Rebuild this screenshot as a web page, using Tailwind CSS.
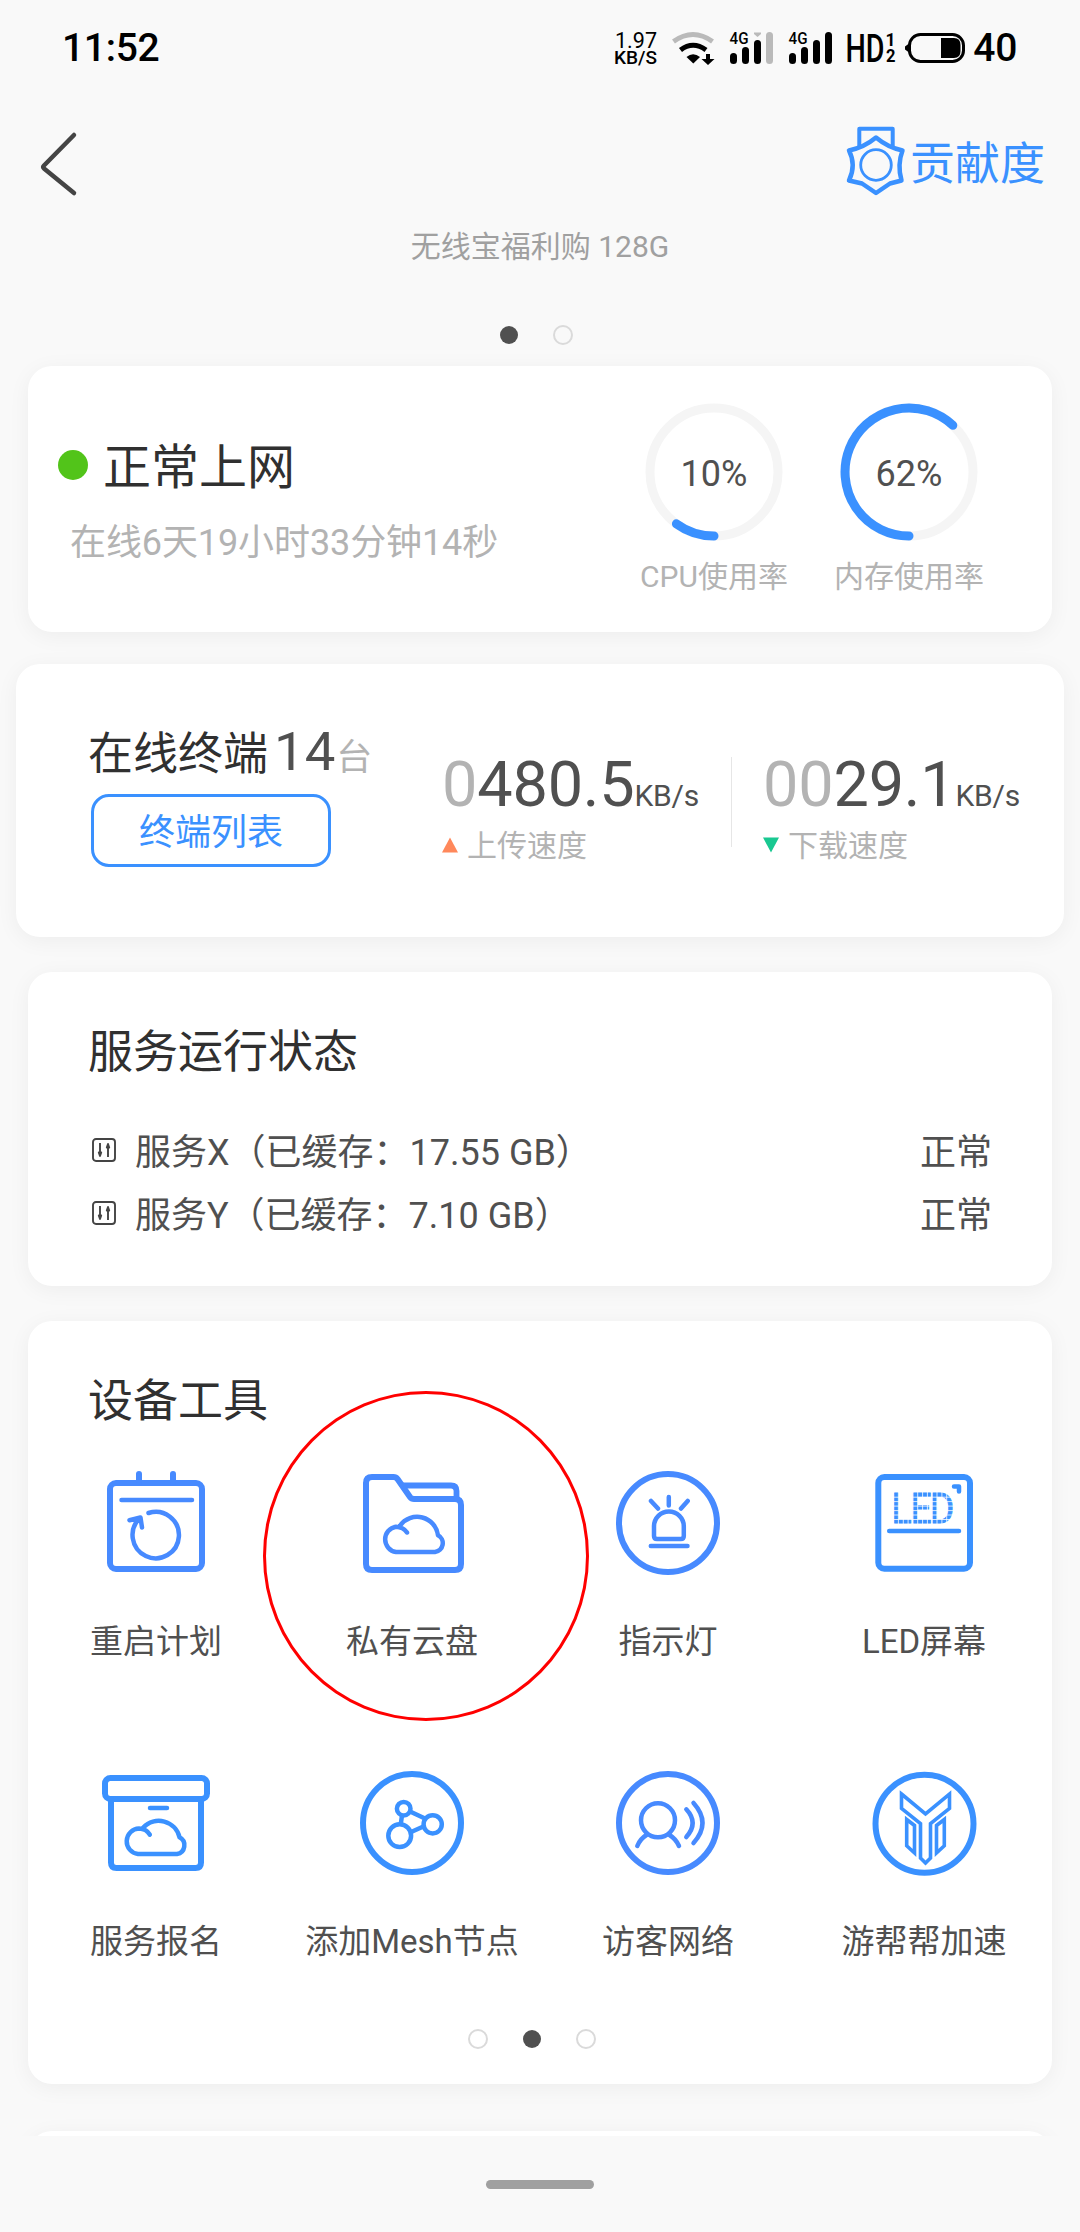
<!DOCTYPE html>
<html lang="zh-CN">
<head>
<meta charset="utf-8">
<title>无线宝</title>
<script src="https://cdn.jsdelivr.net/npm/@tailwindcss/browser@4"></script>
</head>
<body class="w-[1080px] h-[2232px] overflow-hidden bg-[#f9f9f9] font-[Roboto,'Noto_Sans_CJK_SC',sans-serif] text-[#505050]">
<div class="relative flex flex-col w-[1080px] h-[2232px]">

  <!-- status bar -->
  <header class="flex h-24 justify-between pl-[62px] pr-[63px] text-black">
    <div class="text-[39px] leading-[96px] font-medium tracking-[-0.3px]">11:52</div>
    <div class="flex">
      <svg class="w-[360px] h-24" viewBox="610 0 360 96" fill="none">
        <text x="615" y="47.500" font-size="21.500" fill="#000" textLength="42" lengthAdjust="spacingAndGlyphs">1.97</text>
        <text x="614" y="64" font-size="18.500" font-weight="500" fill="#000" textLength="43" lengthAdjust="spacingAndGlyphs">KB/S</text>
        <!-- wifi -->
        <path d="M673.500 41.500Q693 27.500 712.500 41.500" stroke="#bababa" stroke-width="5"/>
        <path d="M680.500 50Q693 40.500 706 50" stroke="#000" stroke-width="5"/>
        <path d="M686.500 57Q693 51.500 700 57L693.300 63.500Z" fill="#000"/>
        <path d="M706 54h4v5h4.500L708 65l-6.500-6H706z" fill="#000"/>
        <!-- sim 1 -->
        <text x="729.500" y="44" font-size="16" font-weight="500" fill="#000" textLength="19" lengthAdjust="spacingAndGlyphs">4G</text>
        <path d="M754 32.500h7v1.500l-3.500 3-3.500-3z" fill="#bababa"/>
        <g fill="#000"><rect x="730" y="53" width="7" height="11" rx="3.500"/><rect x="742" y="47" width="7" height="17" rx="3.500"/><rect x="754" y="40" width="7" height="24" rx="3.500"/></g>
        <rect x="766" y="32" width="7" height="32" rx="3.500" fill="#bababa"/>
        <!-- sim 2 -->
        <text x="788.500" y="44" font-size="16" font-weight="500" fill="#000" textLength="19" lengthAdjust="spacingAndGlyphs">4G</text>
        <g fill="#000"><rect x="789" y="53" width="7" height="11" rx="3.500"/><rect x="801" y="47" width="7" height="17" rx="3.500"/><rect x="813" y="40" width="7" height="24" rx="3.500"/><rect x="825" y="32" width="7" height="32" rx="3.500"/></g>
        <text x="845.500" y="62" font-size="39" font-weight="500" fill="#000" textLength="39" lengthAdjust="spacingAndGlyphs">HD</text>
        <text x="885.500" y="46" font-size="17.500" font-weight="700" fill="#000">1</text>
        <text x="886" y="62" font-size="17.500" font-weight="700" fill="#000" textLength="9.500" lengthAdjust="spacingAndGlyphs">2</text>
        <!-- battery -->
        <rect x="909.500" y="34.500" width="54" height="27" rx="11" stroke="#000" stroke-width="3"/>
        <path d="M909 43.500v9l-4-3v-3z" fill="#000"/>
        <path d="M941 38h13q6.500 0 6.500 7v6q0 7-6.500 7h-13z" fill="#000"/>
      </svg>
      <div class="ml-[3px] text-[39px] leading-[96px] font-medium tracking-[-0.3px]">40</div>
    </div>
  </header>

  <!-- title bar -->
  <div class="flex h-[124px] justify-between pl-[36px] pr-[35px]">
    <svg class="mt-[32px] w-12 h-[76px]" viewBox="36 128 48 76" fill="none" stroke="#444" stroke-width="4.500" stroke-linecap="round" stroke-linejoin="round"><path d="M74 135L44 165.500Q42.500 167 44 168.500L74 193"/></svg>
    <div class="flex text-[#3a91ff]">
      <svg class="mt-[26px] w-[66px] h-[80px]" viewBox="844 122 66 80" fill="none" stroke="currentColor" stroke-width="4">
        <path d="M859.300 148V128.800H892.700V148" stroke-linejoin="round"/>
        <path d="M876 137.500Q888 147.500 902.500 150.500Q897 165 901.500 180.500L890 183.500L876 193L862 183.500L849 180.500Q856.500 165 849 150.500Q864 147.500 876 137.500Z" stroke-width="4.500" stroke-linejoin="round"/>
        <circle cx="876" cy="165" r="15.300" stroke-width="2.800"/>
      </svg>
      <span class="text-[45px] leading-[138px]">贡献度</span>
    </div>
  </div>

  <div class="h-[54px] text-center text-[30px] leading-[54px] text-[#a0a0a0]">无线宝福利购 128G</div>
  <div class="flex h-[92px] items-center justify-center gap-[35px] pt-[30px] pr-[7px]">
    <span class="size-[18px] rounded-full bg-[#505050]"></span>
    <span class="size-5 rounded-full border-2 border-[#dadada]"></span>
  </div>

  <!-- connection -->
  <section class="mx-7 flex h-[266px] justify-between rounded-3xl bg-white pl-[30px] pr-[67px] shadow-[0_4px_22px_rgba(0,0,0,0.05)]">
    <div class="pt-[69px]">
      <div class="flex h-[60px] items-center">
        <span class="mr-[15px] size-[30px] rounded-full bg-[#52c41a]"></span>
        <h2 class="pt-[5px] text-[48px] leading-[66px] text-[#303030]">正常上网</h2>
      </div>
      <p class="mt-[22px] pl-3 text-[36px] leading-[52px] tracking-[-0.1px] text-[#b3b3b3]">在线6天19小时33分钟14秒</p>
    </div>
    <div class="flex gap-[43px] pt-[35px] text-center">
      <div class="w-[152px]">
        <div class="relative">
          <svg class="mx-auto size-[142px]" viewBox="-71 -71 142 142" fill="none" stroke-width="9"><circle r="64" stroke="#f5f5f5"/><path d="M0 64A64 64 0 0 1 -37.600 51.800" stroke="#3a91ff" stroke-linecap="round"/></svg>
          <span class="absolute inset-0 text-[36px] leading-[146px]">10%</span>
        </div>
        <p class="mt-3 whitespace-nowrap text-[30px] leading-[44px] text-[#b3b3b3]">CPU使用率</p>
      </div>
      <div class="w-[152px]">
        <div class="relative">
          <svg class="mx-auto size-[142px]" viewBox="-71 -71 142 142" fill="none" stroke-width="9"><circle r="64" stroke="#f5f5f5"/><path d="M0 64A64 64 0 1 1 43.800 -46.700" stroke="#3a91ff" stroke-linecap="round"/></svg>
          <span class="absolute inset-0 text-[36px] leading-[146px]">62%</span>
        </div>
        <p class="mt-3 whitespace-nowrap text-[30px] leading-[44px] text-[#b3b3b3]">内存使用率</p>
      </div>
    </div>
  </section>

  <!-- terminals and speed -->
  <section class="mx-4 mt-8 flex h-[273px] rounded-3xl bg-white pl-[72px] shadow-[0_4px_22px_rgba(0,0,0,0.05)]">
    <div class="w-[354px] pt-[52px]">
      <div class="flex h-[70px] items-baseline leading-[70px]">
        <span class="text-[45px] text-[#303030]">在线终端</span>
        <span class="ml-[6px] text-[54.500px]">14</span>
        <span class="ml-px text-[36px] text-[#b3b3b3]">台</span>
      </div>
      <div class="ml-[3px] mt-2 h-[73px] w-[240px] rounded-[18px] border-3 border-[#3a91ff] text-center text-[36px] leading-[72px] text-[#3a91ff]">终端列表</div>
    </div>
    <div class="w-[289px] pt-[80px]">
      <div class="flex h-[74px] items-baseline pt-1 text-[63px] leading-[74px] tracking-[-0.2px]"><span class="text-[#b3b3b3]">0</span><span>480.5</span><span class="text-[30px]">KB/s</span></div>
      <div class="flex h-[54px] items-center text-[30px] text-[#b3b3b3]"><svg class="mr-[9px] size-4" viewBox="0 0 16 16"><path d="M8 .5L16 15.500H0z" fill="#ff885b"/></svg>上传速度</div>
    </div>
    <div class="mt-[93px] h-[90px] w-px bg-[#e6e6e6]"></div>
    <div class="pl-[31px] pt-[80px]">
      <div class="flex h-[74px] items-baseline pt-1 text-[63px] leading-[74px] tracking-[-0.2px]"><span class="text-[#b3b3b3]">00</span><span>29.1</span><span class="text-[30px]">KB/s</span></div>
      <div class="flex h-[54px] items-center text-[30px] text-[#b3b3b3]"><svg class="mr-[9px] size-4" viewBox="0 0 16 16"><path d="M0 .5H16L8 15.500z" fill="#19c891"/></svg>下载速度</div>
    </div>
  </section>

  <!-- service state -->
  <section class="mx-7 mt-[35px] h-[314px] rounded-3xl bg-white pl-[60px] pr-[60px] pt-[46px] shadow-[0_4px_22px_rgba(0,0,0,0.05)]">
    <h2 class="text-[45px] leading-[70px] text-[#303030]">服务运行状态</h2>
    <div class="mt-[33px] flex h-[63px] items-center text-[36px] leading-[52px]">
      <svg class="ml-[4px] mr-[19px] mt-[-6px] size-6" viewBox="0 0 24 24" fill="none" stroke="#444" stroke-width="1.900"><rect x="1" y="1" width="22" height="22" rx="3"/><path d="M8 5v13M6.800 14.500L8 18l1.200-3.500zM16 19V6M14.800 9.500L16 6l1.200 3.500z" stroke-linejoin="round"/></svg>
      <span class="flex-1">服务X（已缓存：17.55 GB）</span><span>正常</span>
    </div>
    <div class="flex h-[63px] items-center text-[36px] leading-[52px]">
      <svg class="ml-[4px] mr-[19px] mt-[-6px] size-6" viewBox="0 0 24 24" fill="none" stroke="#444" stroke-width="1.900"><rect x="1" y="1" width="22" height="22" rx="3"/><path d="M8 5v13M6.800 14.500L8 18l1.200-3.500zM16 19V6M14.800 9.500L16 6l1.200 3.500z" stroke-linejoin="round"/></svg>
      <span class="flex-1">服务Y（已缓存：7.10 GB）</span><span>正常</span>
    </div>
  </section>

  <!-- tools -->
  <section class="relative mx-7 mt-[35px] h-[763px] rounded-3xl bg-white pt-[46px] shadow-[0_4px_22px_rgba(0,0,0,0.05)]">
    <h2 class="pl-[60px] text-[45px] leading-[70px] text-[#303030]">设备工具</h2>
    <div class="mt-[26px] grid grid-cols-4 text-center text-[33px] leading-[48px]">
      <div class="flex h-[300px] flex-col items-center gap-[35px]">
        <svg class="size-[120px] shrink-0" viewBox="0 0 120 120" fill="none" stroke="#478aff" stroke-width="4.500" stroke-linecap="round" stroke-linejoin="round">
          <rect x="14" y="20" width="92" height="86" rx="6" stroke-width="6"/>
          <path d="M43 11V19M77 11V19" stroke-width="6"/>
          <path d="M25.500 37H96M52.500 50A23.200 23.200 0 1 1 44 55M33.500 57.300L44.500 54.500L46 64.500"/>
        </svg>
        <span>重启计划</span>
      </div>
      <div class="flex h-[300px] flex-col items-center gap-[35px]">
        <svg class="size-[120px] shrink-0" viewBox="0 0 120 120" fill="none" stroke="#478aff" stroke-width="4.500" stroke-linecap="round" stroke-linejoin="round">
          <path d="M20 14H41.500Q44 14 45.500 16L58 34Q59.500 36 62 36H103Q109 36 109 42V101Q109 107 103 107H20Q14 107 14 101V20Q14 14 20 14Z" stroke-width="6"/>
          <path d="M50.500 22.500H99Q104.500 22.500 104.500 28V35" stroke-width="5.800"/>
          <path d="M55 69.500Q51.500 64 44 63.700A12.800 12.800 0 0 0 44 89H83A8.900 8.900 0 0 0 86 72.300A21 21 0 0 0 48 62.700"/>
        </svg>
        <span>私有云盘</span>
      </div>
      <div class="flex h-[300px] flex-col items-center gap-[35px]">
        <svg class="size-[120px] shrink-0" viewBox="0 0 120 120" fill="none" stroke="#478aff" stroke-width="4.500" stroke-linecap="round" stroke-linejoin="round">
          <circle cx="60" cy="60" r="49" stroke-width="6"/>
          <path d="M60.800 34V42.500M43 38L50 45.500M79.700 38L73 45.500M42.800 83H79.500"/>
          <path d="M46 63.500A14.900 14.900 0 0 1 75.800 63.500V73Q75.800 76 72.800 76H49Q46 76 46 73Z"/>
        </svg>
        <span>指示灯</span>
      </div>
      <div class="flex h-[300px] flex-col items-center gap-[35px]">
        <svg class="size-[120px] shrink-0" viewBox="0 0 120 120" fill="none" stroke="#3a91ff" stroke-width="4.500" stroke-linecap="round" stroke-linejoin="round">
          <rect x="14.300" y="14" width="91.700" height="91.700" rx="6" stroke-width="6"/>
          <path d="M25.200 68H95M90 23.500H95V28.500"/>
          <g fill="#3a91ff" stroke="#3a91ff" stroke-width=".9" font-size="42" stroke-linejoin="miter"><text transform="translate(27.300 60) scale(.9 1)">L</text><text transform="translate(46.300 60) scale(.9 1)">E</text><text transform="translate(65.500 60) scale(.9 1)">D</text></g>
          <path d="M29.600 26V63M34.400 26V63M39.300 26V63M44.100 26V63M48.900 26V63M53.700 26V63M58.600 26V63M63.400 26V63M68.200 26V63M73 26V63M77.900 26V63M82.700 26V63M28 34.200H92M28 38.600H92M28 43.100H92M28 47.600H92M28 52H92M28 56.500H92" stroke="#fff" stroke-width=".8" stroke-linecap="butt"/>
        </svg>
        <span>LED屏幕</span>
      </div>
      <div class="flex h-[300px] flex-col items-center gap-[35px]">
        <svg class="size-[120px] shrink-0" viewBox="0 0 120 120" fill="none" stroke="#3a91ff" stroke-width="4.500" stroke-linecap="round" stroke-linejoin="round">
          <g stroke-width="6"><rect x="9" y="15" width="102" height="21" rx="5.500"/><path d="M15 36V99.500Q15 105 20.500 105H99.500Q105 105 105 99.500V36"/></g>
          <path d="M54 45H71M53.800 71.700Q50.500 65.700 43 65.500A12.800 12.800 0 0 0 42 91H81A8.900 8.900 0 0 0 83.500 74.300A21.300 21.300 0 0 0 47.300 64.500"/>
        </svg>
        <span>服务报名</span>
      </div>
      <div class="flex h-[300px] flex-col items-center gap-[35px]">
        <svg class="size-[120px] shrink-0" viewBox="0 0 120 120" fill="none" stroke="#3a91ff" stroke-width="4.500">
          <circle cx="60" cy="60" r="49" stroke-width="6"/>
          <circle cx="51.700" cy="45.700" r="6.800"/><circle cx="80.700" cy="61.300" r="9.100"/><circle cx="47.700" cy="72.700" r="11.400"/>
          <path d="M58 48.500L73 55.500M50 52.500L48.700 61.500M58 69.500L72.500 63"/>
        </svg>
        <span class="whitespace-nowrap">添加Mesh节点</span>
      </div>
      <div class="flex h-[300px] flex-col items-center gap-[35px]">
        <svg class="size-[120px] shrink-0" viewBox="0 0 120 120" fill="none" stroke="#478aff" stroke-width="4.500" stroke-linecap="round">
          <circle cx="60" cy="60" r="49" stroke-width="6"/>
          <circle cx="50" cy="57.300" r="17"/>
          <path d="M29.300 83Q32 76 38.500 72M71 83Q68 76 61.500 72M78.300 46.300Q91 60 78.300 74M85.500 40Q103.500 60 85.500 80"/>
        </svg>
        <span>访客网络</span>
      </div>
      <div class="flex h-[300px] flex-col items-center gap-[35px]">
        <svg class="size-[120px] shrink-0" viewBox="0.500 0 120 120" fill="none" stroke="#3a91ff" stroke-width="3.600">
          <circle cx="61" cy="60.800" r="49" stroke-width="6"/>
          <path d="M38 31L62 51L86 31V45.500L67 60.500V95L62 100L57 95V60.500L38 45.500Z"/>
          <path d="M43.200 56.500L51 62.500V90L43.200 82.800ZM80.800 56.500L73 62.500V90L80.800 82.800Z"/>
        </svg>
        <span>游帮帮加速</span>
      </div>
    </div>
    <div class="absolute inset-x-0 top-[708px] flex h-5 items-center justify-center gap-[35px] pr-4">
      <span class="size-5 rounded-full border-2 border-[#dadada]"></span>
      <span class="size-[18px] rounded-full bg-[#505050]"></span>
      <span class="size-5 rounded-full border-2 border-[#dadada]"></span>
    </div>
    <!-- highlight -->
    <div class="absolute left-[235px] top-[70px] h-[330px] w-[326px] rounded-[50%] border-3 border-[#f00]"></div>
  </section>

  <!-- next card, cut off by the gesture area -->
  <div class="h-[52px] overflow-hidden px-7 pt-[47px]"><div class="h-24 rounded-3xl bg-white shadow-[0_4px_22px_rgba(0,0,0,0.05)]"></div></div>
  <footer class="flex h-24 justify-center bg-[#f9f9f9] pt-11"><div class="h-[9px] w-[108px] rounded-full bg-[#a0a0a0]"></div></footer>
</div>
</body>
</html>
